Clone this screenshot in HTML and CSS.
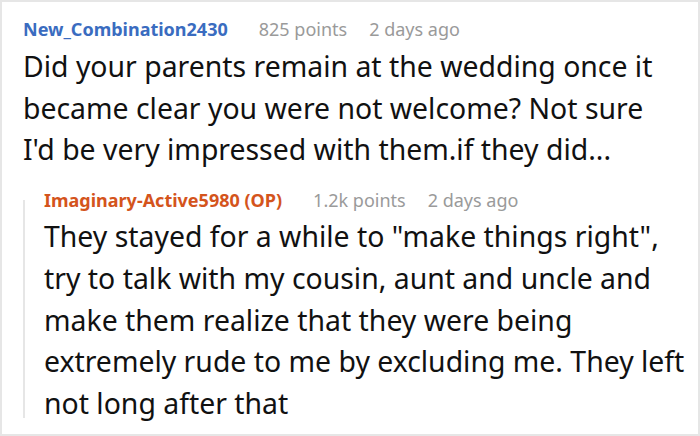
FILE: index.html
```html
<!DOCTYPE html>
<html>
<head>
<meta charset="utf-8">
<link rel="stylesheet" href="styles.css">
</head>
<body>
<div class="frame">
  <div class="comment">
    <div class="meta">
      <span class="user">New_Combination2430</span>
      <span class="info">825 points</span>
      <span class="info">2 days ago</span>
    </div>
    <p class="text first">Did your parents remain at the wedding once it became clear you were not welcome? Not sure I'd be very impressed with them.if they did...</p>
    <div class="reply">
      <div class="thread"></div>
      <div class="reply-body">
        <div class="meta">
          <span class="user op">Imaginary-Active5980 (OP)</span>
          <span class="info">1.2k points</span>
          <span class="info">2 days ago</span>
        </div>
        <p class="text">They stayed for a while to "make things right", try to talk with my cousin, aunt and uncle and make them realize that they were being extremely rude to me by excluding me. They left not long after that</p>
      </div>
    </div>
  </div>
</div>
</body>
</html>
```

FILE: styles.css
```css
html, body {
  margin: 0;
  padding: 0;
  background: #fff;
}
.frame {
  box-sizing: border-box;
  width: 700px;
  height: 436px;
  border: 2px solid #e6e6e6;
  overflow: hidden;
  font-family: "Noto Sans", sans-serif;
  color: #111;
}
.comment {
  padding: 15px 0 0 21px;
}
.meta {
  display: flex;
  align-items: baseline;
  font-size: 18px;
  line-height: 24px;
  white-space: nowrap;
}
.user {
  font-weight: bold;
  color: #3a6cc0;
  margin-right: 31px;
}
.user.op {
  color: #d4541c;
}
.info {
  color: #9a9a9a;
  margin-right: 22px;
}
.text {
  margin: 5px 0 0 0;
  font-size: 28.4px;
  line-height: 41.7px;
}
.text.first {
  max-width: 642px;
}
.reply {
  display: flex;
  margin-top: 17px;
}
.thread {
  flex: none;
  width: 2px;
  background: #e6e6e6;
  margin: 12px 0 7px 0;
}
.reply-body {
  flex: 1;
  padding: 0 8px 0 19px;
}
.reply-body .text {
  margin-top: 4px;
}
```
